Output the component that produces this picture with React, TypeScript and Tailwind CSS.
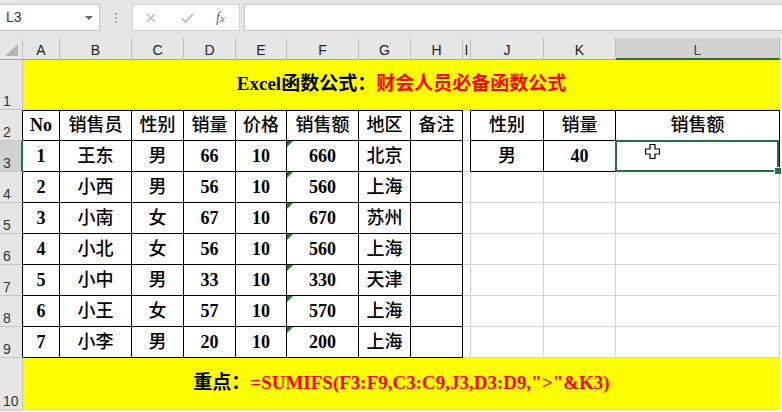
import React from 'react'

const GRID =
  'grid grid-cols-[23px_37px_72px_52px_52px_51px_72px_52px_52px_8px_73px_72px_164px_2px]'
const COLS = ['A', 'B', 'C', 'D', 'E', 'F', 'G', 'H', 'I', 'J', 'K', 'L']
const SERIF = "font-['Liberation_Serif','Noto_Sans_CJK_SC',serif]"
const UI = "font-['Liberation_Sans','Noto_Sans',sans-serif]"

const table = [
  ['No', '销售员', '性别', '销量', '价格', '销售额', '地区', '备注'],
  ['1', '王东', '男', '66', '10', '660', '北京', ''],
  ['2', '小西', '男', '56', '10', '560', '上海', ''],
  ['3', '小南', '女', '67', '10', '670', '苏州', ''],
  ['4', '小北', '女', '56', '10', '560', '上海', ''],
  ['5', '小中', '男', '33', '10', '330', '天津', ''],
  ['6', '小王', '女', '57', '10', '570', '上海', ''],
  ['7', '小李', '男', '20', '10', '200', '上海', ''],
]

const lookup = [
  ['性别', '销量', '销售额'],
  ['男', '40', ''],
]

const cjk = /[\u4e00-\u9fff]/

function RowHead({ n, tone }: { n: number; tone: 'plain' | 'black' | 'selected' }) {
  const edge =
    tone === 'selected'
      ? 'border-r-2 border-r-[#217346] bg-[#d2d2d2]'
      : tone === 'black'
        ? 'border-r border-r-black bg-[#e6e6e6]'
        : 'border-r border-r-[#c6c6c6] bg-[#e6e6e6]'
  return (
    <div
      className={`${edge} border-b border-b-[#c6c6c6] flex items-end pl-[3px] pb-[1px] text-[14px] leading-none text-[#333] ${UI}`}
    >
      {n}
    </div>
  )
}

function Text({ value }: { value: string }) {
  return (
    <span className={cjk.test(value) ? 'font-medium' : 'font-bold'}>{value}</span>
  )
}

function Triangle() {
  return (
    <div className="absolute left-0 top-0 w-0 h-0 border-t-[6px] border-r-[6px] border-t-[#1d7d1d] border-r-transparent" />
  )
}

function Toolbar() {
  return (
    <div className="h-[38px] flex items-start pt-[4px] bg-[#e6e6e6]">
      <div className="w-[100px] h-[27px] bg-white border border-[#c6c6c6] border-l-0 flex items-center justify-between pl-[6px] pr-[6px]">
        <span className={`text-[14px] text-[#333] ${UI}`}>L3</span>
        <svg width="8" height="4" viewBox="0 0 8 4">
          <path d="M0 0h8L4 4z" fill="#666" />
        </svg>
      </div>
      <div className="w-[32px] h-[27px] flex flex-col items-center justify-center gap-[2px]">
        <span className="w-[2px] h-[2px] bg-[#a6a6a6]" />
        <span className="w-[2px] h-[2px] bg-[#a6a6a6]" />
        <span className="w-[2px] h-[2px] bg-[#a6a6a6]" />
      </div>
      <div className="w-[108px] h-[27px] bg-white border border-[#d0d0d0] flex items-center">
        <svg className="ml-[13px]" width="10" height="10" viewBox="0 0 10 10">
          <path d="M1 1L9 9M9 1L1 9" stroke="#b3b3b3" strokeWidth="1.3" />
        </svg>
        <svg className="ml-[25px]" width="13" height="10" viewBox="0 0 13 10">
          <path d="M1 5.5L4.5 9L12 1" stroke="#b3b3b3" strokeWidth="1.6" fill="none" />
        </svg>
        <span className="ml-[22px] text-[14px] italic text-[#666] font-['Liberation_Serif',serif]">
          f<span className="text-[11px]">x</span>
        </span>
      </div>
      <div className="ml-[4px] flex-1 h-[27px] bg-white border border-[#c6c6c6] border-r-0" />
    </div>
  )
}

function ColumnHeader() {
  return (
    <div className={`${GRID} h-[22px] bg-[#e6e6e6]`}>
      <div className="relative border-r border-r-[#bdbdbd] border-b border-b-[#a6a6a6]">
        <svg className="absolute right-[4px] bottom-[3px]" width="13" height="12" viewBox="0 0 13 12">
          <path d="M13 0V12H0z" fill="#b4b4b4" />
        </svg>
      </div>
      {COLS.map((c) =>
        c === 'L' ? (
          <div
            key={c}
            className={`bg-[#d2d2d2] border-r border-r-[#bdbdbd] border-b-2 border-b-[#217346] flex items-end justify-center pb-[1px] text-[14px] leading-none text-[#444] ${UI}`}
          >
            {c}
          </div>
        ) : (
          <div
            key={c}
            className={`border-r border-r-[#bdbdbd] border-b border-b-[#a6a6a6] flex items-end justify-center pb-[2px] text-[14px] leading-none text-[#222] ${UI}`}
          >
            {c}
          </div>
        ),
      )}
      <div className="border-b border-b-[#a6a6a6]" />
    </div>
  )
}

function BannerRow({ n, height, children }: { n: number; height: string; children: React.ReactNode }) {
  return (
    <div className={`${GRID} ${height}`}>
      <RowHead n={n} tone="plain" />
      <div
        className={`col-span-12 bg-[#ffff00] border-b border-b-[#d4d4d4] flex items-center justify-center text-[19px] font-bold ${SERIF}`}
      >
        {children}
      </div>
      <div className="bg-white" />
    </div>
  )
}

function BodyRow({ r }: { r: number }) {
  const main = table[r - 2]
  const side = r <= 3 ? lookup[r - 2] : null
  const top = r === 2 ? 'border-t border-t-black' : ''
  return (
    <div className={`${GRID} h-[31px] text-[18px] text-black ${SERIF}`}>
      <RowHead n={r} tone={r === 3 ? 'selected' : 'black'} />
      {main.map((v, i) => (
        <div
          key={i}
          className={`relative bg-white border-r border-b border-black ${top} flex items-center justify-center`}
        >
          {i === 5 && r >= 3 && <Triangle />}
          <Text value={v} />
        </div>
      ))}
      <div
        className={`bg-white border-b border-b-[#d4d4d4] ${r === 2 ? 'border-t border-t-[#d4d4d4]' : ''} ${
          r <= 3 ? 'border-r border-r-black' : 'border-r border-r-[#d4d4d4]'
        }`}
      />
      {side
        ? side.map((v, i) => (
            <div
              key={i}
              className={`relative bg-white border-r border-b border-black ${top} flex items-center justify-center`}
            >
              <Text value={v} />
              {r === 3 && i === 2 && (
                <>
                  <svg className="absolute left-[29px] top-[3px]" width="15" height="15" viewBox="0 0 15 15">
                    <path
                      d="M5 0.5h5v4.5h4.5v5h-4.5v4.5h-5v-4.5h-4.5v-5h4.5z"
                      fill="white"
                      stroke="black"
                      strokeWidth="1.2"
                    />
                  </svg>
                  <div className="absolute -left-px -top-px right-0 -bottom-px border-2 border-[#217346] pointer-events-none" />
                  <div className="absolute right-[-3px] bottom-[-4px] w-[6px] h-[6px] bg-[#217346] border border-white box-content" />
                </>
              )}
            </div>
          ))
        : [0, 1, 2].map((i) => (
            <div key={i} className="bg-white border-r border-b border-[#d4d4d4]" />
          ))}
      <div className="bg-white" />
    </div>
  )
}

export default function App() {
  return (
    <div className="w-[782px] h-[412px] overflow-hidden bg-[#e6e6e6]">
      <Toolbar />
      <ColumnHeader />
      <BannerRow n={1} height="h-[50px]">
        <span>Excel函数公式：</span>
        <span className="text-[#ff0000]">财会人员必备函数公式</span>
      </BannerRow>
      {[2, 3, 4, 5, 6, 7, 8, 9].map((r) => (
        <BodyRow key={r} r={r} />
      ))}
      <BannerRow n={10} height="h-[52px]">
        <span>重点：</span>
        <span className="text-[#ff0000]">=SUMIFS(F3:F9,C3:C9,J3,D3:D9,"&gt;"&amp;K3)</span>
      </BannerRow>
      <div className={`${GRID} h-[2px]`}>
        <div className="bg-[#e6e6e6]" />
        <div className="col-span-13 bg-white" />
      </div>
    </div>
  )
}
